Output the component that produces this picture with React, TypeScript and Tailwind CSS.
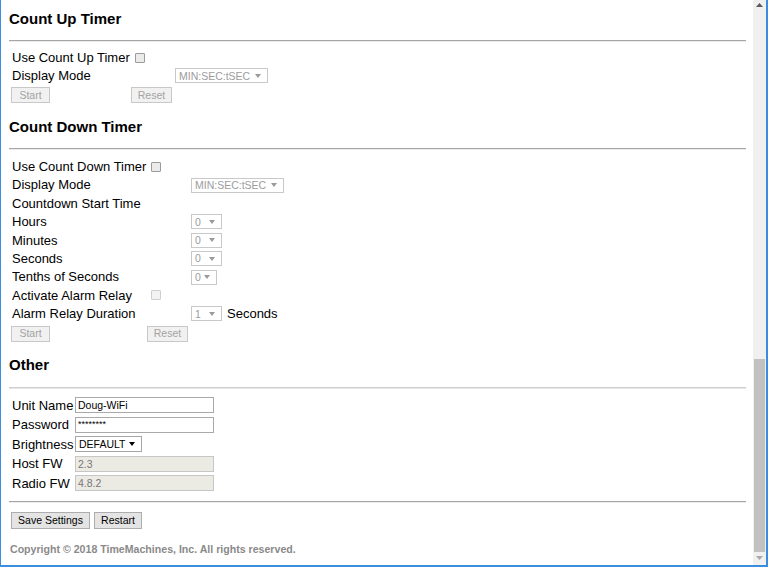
import React from 'react';

const Arrow: React.FC<{ dark?: boolean }> = ({ dark }) => (
  <svg width="6" height="4" viewBox="0 0 6 4" className={dark ? 'text-black' : 'text-[#9a9a9a]'}>
    <path d="M0 0h6L3 4z" fill="currentColor" />
  </svg>
);

const Select: React.FC<{ text: string; className: string; dark?: boolean }> = ({ text, className, dark }) => (
  <span
    className={`inline-flex items-center justify-between h-[15px] pl-[3px] pr-[6px] border text-[10.5px] leading-none ${
      dark ? 'border-[#a6a6a6] text-black bg-white' : 'border-[#c9c9c9] text-[#9c9c9c] bg-white'
    } ${className}`}
  >
    <span>{text}</span>
    <Arrow dark={dark} />
  </span>
);

const Button: React.FC<{ label: string; className: string; disabled?: boolean }> = ({ label, className, disabled }) => (
  <span
    className={`flex items-center justify-center h-[16px] border text-[10.5px] leading-none ${
      disabled ? 'border-[#c8c8c8] bg-[#f1f1f1] text-[#a3a3a3]' : 'border-[#adadad] bg-[#e4e4e4] text-black'
    } ${className}`}
  >
    {label}
  </span>
);

const Check: React.FC<{ disabled?: boolean }> = ({ disabled }) => (
  <span
    className={`block w-[10px] h-[10px] border rounded-[1px] ${
      disabled ? 'border-[#cfcfcf] bg-[#f2f2f2]' : 'border-[#9b9b9b] bg-[#ebebeb]'
    }`}
  />
);

const Rule: React.FC<{ className: string; light?: boolean }> = ({ className, light }) => (
  <div
    className={`h-[2px] border-t border-b ${
      light ? 'border-t-[#cfcfcf] border-b-[#e6e6e6]' : 'border-t-[#a5a5a5] border-b-[#ececec]'
    } ${className}`}
  />
);

const Heading: React.FC<{ title: string; className: string; ruleClass: string; light?: boolean }> = ({
  title,
  className,
  ruleClass,
  light,
}) => (
  <>
    <h3 className={`h-[18px] leading-[18px] text-[15px] font-bold text-black ${className}`}>{title}</h3>
    <Rule className={ruleClass} light={light} />
  </>
);

const Input: React.FC<{ value: string; disabled?: boolean; small?: boolean }> = ({ value, disabled, small }) => (
  <span
    className={`flex h-[16px] w-[139px] pl-[2px] border leading-none ${
      disabled ? 'border-[#c6c6c6] bg-[#ebebe4] text-[#777]' : 'border-[#a9a9a9] bg-white text-black'
    } ${small ? 'text-[9px] items-start pt-[2px]' : 'text-[10.5px] items-center'}`}
  >
    {value}
  </span>
);

export default function App() {
  const downRows: { label: string; cell?: React.ReactNode; mid?: React.ReactNode }[] = [
    { label: 'Use Count Down Timer', mid: <Check /> },
    { label: 'Display Mode', cell: <Select text="MIN:SEC:tSEC" className="w-[93px]" /> },
    { label: 'Countdown Start Time' },
    { label: 'Hours', cell: <Select text="0" className="w-[31px]" /> },
    { label: 'Minutes', cell: <Select text="0" className="w-[31px]" /> },
    { label: 'Seconds', cell: <Select text="0" className="w-[31px]" /> },
    { label: 'Tenths of Seconds', cell: <Select text="0" className="w-[26px] pr-[5px]" /> },
    { label: 'Activate Alarm Relay', mid: <Check disabled /> },
    {
      label: 'Alarm Relay Duration',
      cell: (
        <span className="flex items-center gap-[5px]">
          <Select text="1" className="w-[31px]" />
          <span>Seconds</span>
        </span>
      ),
    },
  ];

  const otherRows: { label: string; field: React.ReactNode }[] = [
    { label: 'Unit Name', field: <Input value="Doug-WiFi" /> },
    { label: 'Password', field: <Input value="********" small /> },
    { label: 'Brightness', field: <Select text="DEFAULT" className="w-[67px] h-[16px]" dark /> },
    { label: 'Host FW', field: <Input value="2.3" disabled /> },
    { label: 'Radio FW', field: <Input value="4.8.2" disabled /> },
  ];

  return (
    <div className="w-[768px] h-[567px] flex bg-white overflow-hidden border-l border-r-2 border-b-2 border-[#3b8de0] font-['Liberation_Sans',Arial,sans-serif] text-[13px] text-black">
      {/* Page content */}
      <div className="flex-1 pl-[8px] pr-[7px]">
        {/* Count Up Timer */}
        <Heading title="Count Up Timer" className="mt-[10px]" ruleClass="mt-[12px]" />
        <div className="mt-[6px] pl-[2px]">
          <div className="grid grid-cols-[120px_44px_auto] items-center h-[18px]">
            <span className="pl-[1px] whitespace-nowrap">Use Count Up Timer</span>
            <span className="pl-[4px] flex items-center">
              <Check />
            </span>
            <span />
          </div>
          <div className="grid grid-cols-[120px_44px_auto] items-center h-[18px]">
            <span className="pl-[1px]">Display Mode</span>
            <span />
            <span className="flex items-center">
              <Select text="MIN:SEC:tSEC" className="w-[93px]" />
            </span>
          </div>
          <div className="grid grid-cols-[120px_44px_auto] items-center mt-[3px]">
            <span className="flex">
              <Button label="Start" className="w-[39px]" disabled />
            </span>
            <span className="flex">
              <Button label="Reset" className="w-[41px]" disabled />
            </span>
          </div>
        </div>

        {/* Count Down Timer */}
        <Heading title="Count Down Timer" className="mt-[15px]" ruleClass="mt-[12px]" />
        <div className="mt-[7px] pl-[2px]">
          {downRows.map((r) => (
            <div key={r.label} className="grid grid-cols-[136px_44px_auto] items-center h-[18.4px]">
              <span className="pl-[1px] whitespace-nowrap">{r.label}</span>
              <span className="pl-[4px] flex items-center">{r.mid}</span>
              <span className="flex items-center">{r.cell}</span>
            </div>
          ))}
          <div className="grid grid-cols-[136px_44px_auto] items-center mt-[3px]">
            <span className="flex">
              <Button label="Start" className="w-[39px]" disabled />
            </span>
            <span className="flex">
              <Button label="Reset" className="w-[41px]" disabled />
            </span>
          </div>
        </div>

        {/* Other */}
        <Heading title="Other" className="mt-[14px]" ruleClass="mt-[13px]" light />
        <div className="mt-[7px] pl-[3px]">
          {otherRows.map((r) => (
            <div key={r.label} className="grid grid-cols-[63px_auto] items-center h-[19.5px]">
              <span className="whitespace-nowrap">{r.label}</span>
              <span className="flex items-center">{r.field}</span>
            </div>
          ))}
        </div>
        <Rule className="mt-[8px]" />
        <div className="mt-[9px] pl-[2px] flex gap-[4px]">
          <Button label="Save Settings" className="w-[79px] h-[17px]" />
          <Button label="Restart" className="w-[48px] h-[17px]" />
        </div>
        <p className="mt-[14px] text-[10.6px] leading-[13px] font-bold text-[#8a8a8a] pl-[1px]">
          Copyright © 2018 TimeMachines, Inc. All rights reserved.
        </p>
      </div>

      {/* Scrollbar */}
      <div className="w-[13px] h-full bg-[#f0f0f0] flex flex-col items-center">
        <svg width="7" height="4" viewBox="0 0 7 4" className="mt-[3px] text-[#5a5a5a]">
          <path d="M0 4h7L3.5 0z" fill="currentColor" />
        </svg>
        <div className="mt-[352px] w-[11px] h-[193px] bg-[#c1c1c1]" />
        <svg width="7" height="4" viewBox="0 0 7 4" className="mt-[4px] text-[#a8a8a8]">
          <path d="M0 0h7L3.5 4z" fill="currentColor" />
        </svg>
      </div>
    </div>
  );
}
